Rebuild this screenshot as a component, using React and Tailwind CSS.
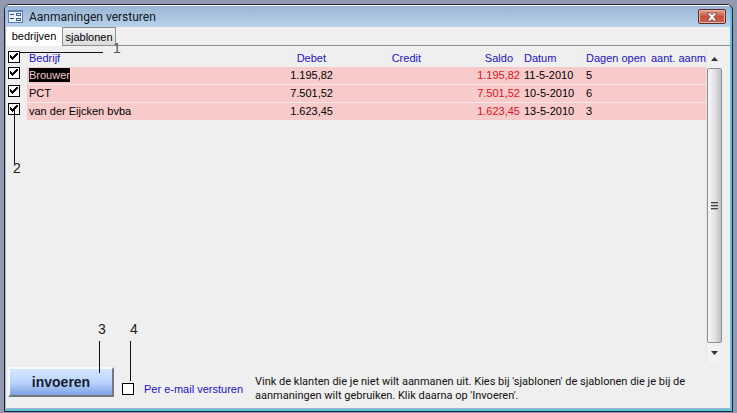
import { useState } from "react";

const rows = [
  { id: "brouwer", bedrijf: "Brouwer", bedrag: "1.195,82", datum: "11-5-2010", dagen: "5", selected: true },
  { id: "pct", bedrijf: "PCT", bedrag: "7.501,52", datum: "10-5-2010", dagen: "6" },
  { id: "eijcken", bedrijf: "van der Eijcken bvba", bedrag: "1.623,45", datum: "13-5-2010", dagen: "3" },
];

function CheckBox({ id, label, checked, onChange }) {
  return (
    <span className="relative block size-3">
      <input
        id={id}
        type="checkbox"
        aria-label={label}
        checked={checked}
        onChange={onChange}
        className="block size-3 appearance-none border border-black bg-white"
      />
      {checked && (
        <svg viewBox="0 0 12 12" className="pointer-events-none absolute inset-0 size-3" shapeRendering="crispEdges" aria-hidden="true">
          <path d="M2 4h1v1h1v1h1v-1h1v-1h1v-1h1v-1h2v2h-1v1h-1v1h-1v1h-1v1h-1v1h-1v-1h-1v-1h-1z" fill="#000" />
        </svg>
      )}
    </span>
  );
}

function TitleBar() {
  return (
    <header className="flex h-[22px] items-center gap-[6px] border-t border-white bg-linear-to-b from-[#99b5d4] to-[#bad2ec] pl-[2px] pr-1">
      <svg viewBox="0 0 15 13" className="h-[13px] w-[15px] shrink-0" shapeRendering="crispEdges" aria-hidden="true">
        <rect width="15" height="13" rx="1" fill="#5b7fb8" />
        <rect x="1" y="2" width="13" height="10" fill="#e8f0fb" />
        <path d="M2 4h4v1h-4zM2 8h4v1h-4z" fill="#2d4a80" />
        <path d="M8.500 3.500h4v2h-4zM8.500 8.500h4v2h-4z" fill="#fff" stroke="#3f609b" />
      </svg>
      <h1 className="flex-1 font-['Roboto',sans-serif] text-xs leading-5 text-[#101820]">Aanmaningen versturen</h1>
      <button
        type="button"
        aria-label="Sluiten"
        className="flex h-[15px] w-7 items-center justify-center rounded-xs border border-[#5c2a2c] bg-linear-to-b from-[#e3a391] via-[#c8523f] to-[#c9614c] shadow-[inset_0_0_0_1px_#e9b6a8]"
      >
        <svg viewBox="0 0 12 10" className="h-[10px] w-3" aria-hidden="true">
          <path d="M1 1h3.500l1.500 1.800 1.500-1.800h3.500l-3.200 4 3.200 4h-3.500l-1.500-1.800-1.500 1.800h-3.500l3.200-4z" fill="#fff" stroke="#6b4444" strokeWidth=".8" />
        </svg>
      </button>
    </header>
  );
}

function ScrollBar() {
  return (
    <div className="flex w-4 shrink-0 flex-col border-l border-[#e4e4e4] bg-[#f1f1f1]">
      <button type="button" aria-label="Omhoog" className="flex h-[18px] items-center justify-center">
        <svg viewBox="0 0 7 4" className="h-1 w-[7px]" aria-hidden="true">
          <path d="M3.500 0l3.500 4h-7z" fill="#333" />
        </svg>
      </button>
      <div className="flex flex-1 items-center justify-center rounded-xs border border-[#8e8e8e] bg-linear-to-r from-[#f6f6f6] via-[#e4e4e6] to-[#bfc0c6]">
        <svg viewBox="0 0 7 8" className="h-2 w-[7px]" shapeRendering="crispEdges" aria-hidden="true">
          <path d="M0 0h7v1h-7zM0 3h7v1h-7zM0 6h7v1h-7z" fill="#444" />
          <path d="M0 1h7v1h-7zM0 4h7v1h-7zM0 7h7v1h-7z" fill="#aaa" />
        </svg>
      </div>
      <button type="button" aria-label="Omlaag" className="flex h-5 items-center justify-center">
        <svg viewBox="0 0 7 4" className="h-1 w-[7px]" aria-hidden="true">
          <path d="M0 0h7l-3.500 4z" fill="#333" />
        </svg>
      </button>
    </div>
  );
}

export default function App() {
  const [checks, setChecks] = useState({ all: true, brouwer: true, pct: true, eijcken: true, email: false });
  const toggle = (key) => () => setChecks((c) => ({ ...c, [key]: !c[key] }));

  return (
    <div className="flex min-h-screen bg-[#9299b0] pt-1 pr-1 pb-px pl-1 font-['Liberation_Sans',Arial,sans-serif] text-[11px] text-black">
      <main className="relative flex flex-1 flex-col overflow-hidden rounded-t-md border border-[#20262f] bg-[#5fc3de]">
        <div className="mr-[2px] mb-[2px] flex flex-1 flex-col border-b border-l border-[#a5b5cb] bg-[#efefef]">
          <TitleBar />

          <nav role="tablist" className="flex h-[19px] items-end border-b border-[#8b9097]">
            <button type="button" role="tab" aria-selected="true" className="h-[19px] w-14 self-start bg-white pb-px leading-4">
              bedrijven
            </button>
            <button type="button" role="tab" aria-selected="false" className="h-[18px] w-[54px] border border-b-0 border-[#8b9097] bg-linear-to-b from-[#f4f4f4] to-[#dcdcde] leading-4">
              sjablonen
            </button>
          </nav>

          <section className="flex flex-1 pt-1 pr-2">
            <div className="relative min-w-0 flex-1 overflow-hidden">
              <table className="w-full table-fixed border-separate border-spacing-0">
                <colgroup>
                  <col className="w-[21px]" />
                  <col />
                  <col className="w-[100px]" />
                  <col className="w-[94px]" />
                  <col className="w-[93px]" />
                  <col className="w-[62px]" />
                  <col className="w-[68px]" />
                  <col className="w-[56px]" />
                </colgroup>
                <thead>
                  <tr className="h-[17px] text-left align-top text-[#1a12c8]">
                    <td className="p-0 pt-px pl-[2px]">
                      <CheckBox id="all" label="Alles selecteren" checked={checks.all} onChange={toggle("all")} />
                    </td>
                    <th className="p-0 pl-[2px] font-normal leading-4">Bedrijf</th>
                    <th className="p-0 pr-[7px] text-right font-normal leading-4">Debet</th>
                    <th className="p-0 pr-[6px] text-right font-normal leading-4">Credit</th>
                    <th className="p-0 pr-[7px] text-right font-normal leading-4">Saldo</th>
                    <th className="p-0 pl-1 font-normal leading-4">Datum</th>
                    <th className="p-0 pl-1 font-normal leading-4">Dagen open</th>
                    <th className="p-0 text-right font-normal leading-4 whitespace-nowrap">aant. aanm</th>
                  </tr>
                </thead>
                <tbody>
                  {rows.map((r) => (
                    <tr key={r.id} className="h-[18px] align-top *:border-b *:border-[#f3e9e9] *:bg-[#f9caca] *:p-0 *:leading-4 *:first:border-transparent *:first:bg-transparent">
                      <td>
                        <div className="pl-[2px]">
                          <CheckBox id={r.id} label={r.bedrijf} checked={checks[r.id]} onChange={toggle(r.id)} />
                        </div>
                      </td>
                      <td>
                        <span className={r.selected ? "ml-[2px] bg-black py-px text-[#f9caca]" : "ml-[2px]"}>{r.bedrijf}</span>
                      </td>
                      <td className="text-right">{r.bedrag}</td>
                      <td />
                      <td className="text-right text-[#e0141c]">{r.bedrag}</td>
                      <td><span className="ml-1">{r.datum}</span></td>
                      <td><span className="ml-1">{r.dagen}</span></td>
                      <td />
                    </tr>
                  ))}
                </tbody>
              </table>
              <svg viewBox="0 0 100 130" className="pointer-events-none absolute top-0 left-0 h-[130px] w-[100px]" shapeRendering="crispEdges" aria-hidden="true">
                <path d="M13 2.500h84M8.500 60v54" stroke="#111" fill="none" />
              </svg>
              <span className="absolute top-[110px] left-[7px] text-sm leading-4 text-[#222]">2</span>
            </div>
            <ScrollBar />
          </section>

          <footer className="flex items-start gap-2 pt-1 pr-8 pb-[5px] pl-[2px]">
            <div className="relative">
              <button type="button" className="h-[30px] w-[106px] border-2 border-t-[#f6f9ff] border-r-[#77777d] border-b-[#77777d] border-l-[#f6f9ff] bg-linear-to-b from-[#d3e5ff] via-[#bcd6fd] to-[#7ba3e2] text-sm leading-4 font-bold text-[#14202e]">
                invoeren
              </button>
              <span className="absolute -top-[46px] left-[90px] text-sm leading-4 text-[#222]">3</span>
              <span className="absolute -top-[26px] left-[91px] h-8 w-px bg-[#111]" />
            </div>
            <div className="flex items-center gap-[10px] pt-[14px]">
              <div className="relative">
                <CheckBox id="email" label="Per e-mail versturen" checked={checks.email} onChange={toggle("email")} />
                <span className="absolute -top-[62px] left-2 text-sm leading-4 text-[#222]">4</span>
                <span className="absolute -top-[42px] left-2 h-10 w-px bg-[#111]" />
              </div>
              <label htmlFor="email" className="leading-4 whitespace-nowrap text-[#1a12c8]">Per e-mail versturen</label>
            </div>
            <p className="ml-1 flex-1 pt-2 font-['Roboto',sans-serif] leading-[14px] text-[#111]">
              Vink de klanten die je niet wilt aanmanen uit. Kies bij 'sjablonen' de sjablonen die je bij de aanmaningen wilt gebruiken. Klik daarna op 'Invoeren'.
            </p>
          </footer>
        </div>
        <span className="absolute top-[35px] left-[108px] text-sm leading-4 text-[#555]">1</span>
      </main>
    </div>
  );
}
